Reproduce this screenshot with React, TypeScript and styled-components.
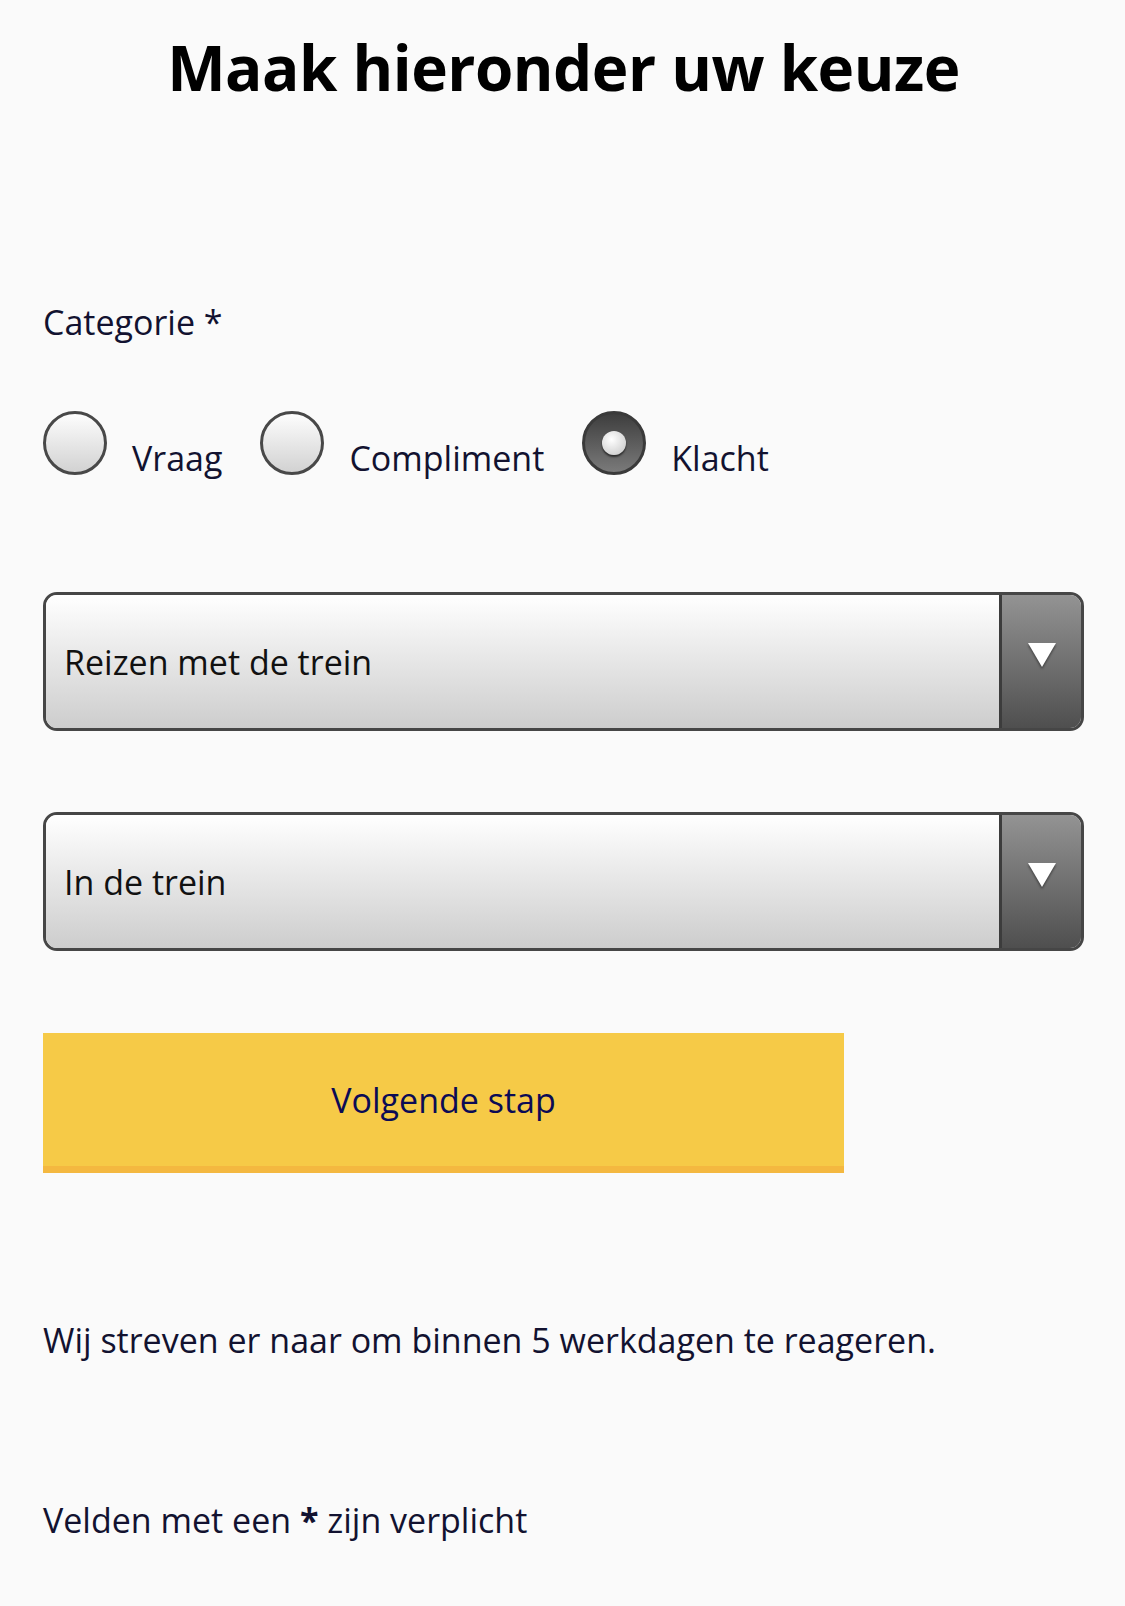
import {createGlobalStyle} from 'styled-components';
import styled, {css} from 'styled-components';

const GlobalStyle = createGlobalStyle`
	html, body {
		margin: 0;
		padding: 0;
		background: #fafafa;
	}

	body {
		font-family: 'Open Sans', 'Noto Sans', sans-serif;
		color: #121230;
	}
`;

const Page = styled.main`
	width: 1125px;
	min-height: 1606px;
	box-sizing: border-box;
	padding: 0 41px 0 43px;
	display: flex;
	flex-direction: column;
`;

const Title = styled.h1`
	margin: 22px 0 0;
	font-size: 62px;
	line-height: 90px;
	font-weight: 700;
	text-align: center;
	color: #000;
	letter-spacing: -0.5px;
`;

const FieldLabel = styled.div`
	margin-top: 188px;
	font-size: 34px;
	line-height: 44px;
`;

const RadioGroup = styled.div`
	margin-top: 67px;
	display: flex;
	align-items: flex-start;
	gap: 38px;
`;

const RadioItem = styled.label`
	display: flex;
	align-items: flex-start;
	gap: 25px;
`;

const RadioCircle = styled.span<{readonly $checked?: boolean}>(props => css`
	width: 64px;
	height: 64px;
	box-sizing: border-box;
	border-radius: 50%;
	border: 3px solid #484848;
	display: flex;
	align-items: center;
	justify-content: center;
	background: linear-gradient(#fdfdfd, #d2d2d2);

	${props.$checked && css`
		background: linear-gradient(#3e3e3e, #7a7a7a);
		border-color: #3a3a3a;

		&::after {
			content: '';
			width: 24px;
			height: 24px;
			border-radius: 50%;
			background: radial-gradient(circle at 40% 35%, #ffffff, #cfcfcf 80%);
			box-shadow: 0 2px 2px rgba(0, 0, 0, 0.6);
		}
	`}
`);

const RadioText = styled.span`
	font-size: 34px;
	line-height: 44px;
	margin-top: 25px;
`;

const Select = styled.div<{readonly $top: number}>(props => css`
	margin-top: ${props.$top}px;
	height: 139px;
	box-sizing: border-box;
	border: 3px solid #464646;
	border-radius: 14px;
	overflow: hidden;
	display: flex;
`);

const SelectValue = styled.div`
	flex: 1;
	display: flex;
	align-items: center;
	padding: 0 18px;
	font-size: 34px;
	color: #111;
	background: linear-gradient(#ffffff, #cdcdcd);
	border-right: 3px solid #3c3c3c;
`;

const SelectArrow = styled.div`
	width: 79px;
	display: flex;
	align-items: flex-start;
	justify-content: center;
	padding-top: 47px;
	box-sizing: border-box;
	background: linear-gradient(#939393, #4f4f4f);

	svg {
		filter: drop-shadow(0 2px 1px rgba(0, 0, 0, 0.45));
	}
`;

const NextButton = styled.button`
	margin-top: 82px;
	width: 801px;
	height: 140px;
	border: none;
	border-bottom: 7px solid #f4b840;
	background: #f6ca47;
	font-family: inherit;
	font-size: 34px;
	color: #0b0b55;
	padding: 0;
	cursor: pointer;
`;

const Note = styled.p<{readonly $top: number}>(props => css`
	margin: ${props.$top}px 0 0;
	font-size: 34px;
	line-height: 44px;

	strong {
		font-weight: 700;
	}
`);

const ArrowDown = () => (
	<svg width='30' height='26' viewBox='0 0 30 26'>
		<polygon points='1,1 29,1 15,25' fill='#fff'/>
	</svg>
);

const categories = [
	{label: 'Vraag', checked: false},
	{label: 'Compliment', checked: false},
	{label: 'Klacht', checked: true},
];

export default function App() {
	return (
		<>
			<GlobalStyle/>
			<Page>
				<Title>Maak hieronder uw keuze</Title>
				<FieldLabel>Categorie *</FieldLabel>
				<RadioGroup>
					{categories.map(item => (
						<RadioItem key={item.label}>
							<RadioCircle $checked={item.checked}/>
							<RadioText>{item.label}</RadioText>
						</RadioItem>
					))}
				</RadioGroup>
				<Select $top={112}>
					<SelectValue>Reizen met de trein</SelectValue>
					<SelectArrow><ArrowDown/></SelectArrow>
				</Select>
				<Select $top={81}>
					<SelectValue>In de trein</SelectValue>
					<SelectArrow><ArrowDown/></SelectArrow>
				</Select>
				<NextButton type='button'>Volgende stap</NextButton>
				<Note $top={145}>Wij streven er naar om binnen 5 werkdagen te reageren.</Note>
				<Note $top={136}>Velden met een <strong>*</strong> zijn verplicht</Note>
			</Page>
		</>
	);
}
